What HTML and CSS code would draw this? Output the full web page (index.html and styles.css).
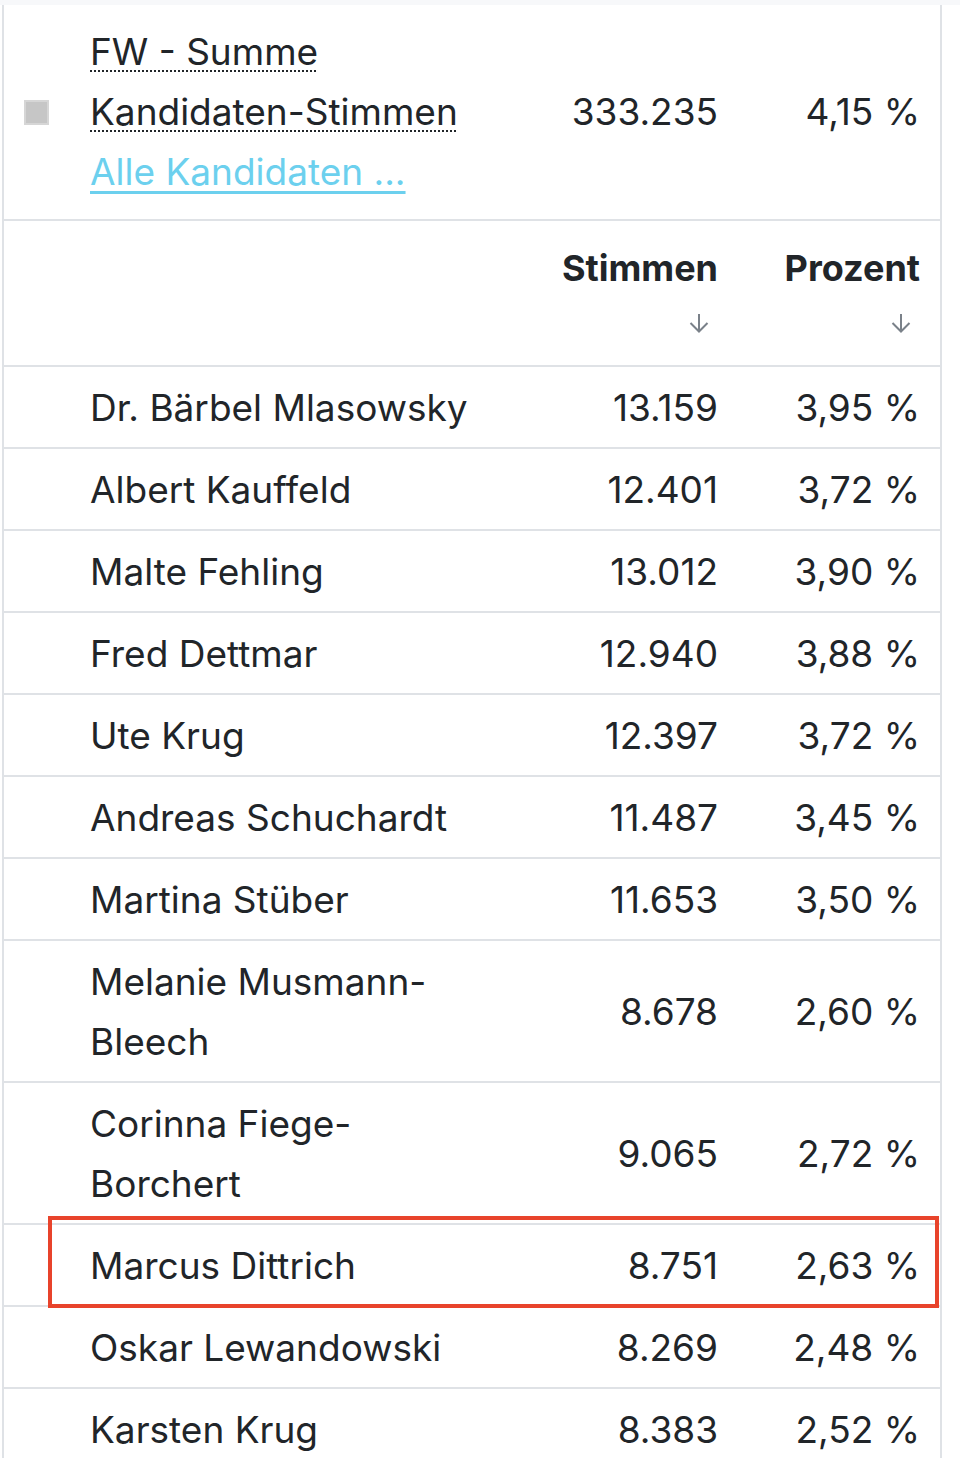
FILE: index.html
```html
<!DOCTYPE html>
<html lang="de">
<head>
<meta charset="utf-8">
<title>Kandidaten</title>
<link rel="stylesheet" href="styles.css">
</head>
<body>
<div class="topband"></div>
<div class="table">
  <div class="row row-party">
    <div class="cell cell-icon"><span class="swatch"></span></div>
    <div class="cell cell-name">
      <abbr title="Freie Wähler - Summe Kandidaten-Stimmen">FW - Summe Kandidaten-Stimmen</abbr><br>
      <a href="#" class="link">Alle Kandidaten ...</a>
    </div>
    <div class="cell cell-num">333.235</div>
    <div class="cell cell-num">4,15 %</div>
  </div>
  <div class="row row-head">
    <div class="cell cell-icon"></div>
    <div class="cell cell-name"></div>
    <div class="cell cell-head">
      <span class="head-label">Stimmen</span>
      <span class="sort"><svg width="20" height="20" viewBox="0 0 20 20"><path d="M10 1V18.5M1.5 10L10 18.5L18.5 10" fill="none" stroke="#7a8189" stroke-width="2"/></svg></span>
    </div>
    <div class="cell cell-head">
      <span class="head-label">Prozent</span>
      <span class="sort"><svg width="20" height="20" viewBox="0 0 20 20"><path d="M10 1V18.5M1.5 10L10 18.5L18.5 10" fill="none" stroke="#7a8189" stroke-width="2"/></svg></span>
    </div>
  </div>
  <div class="row"><div class="cell cell-icon"></div><div class="cell cell-name">Dr. Bärbel Mlasowsky</div><div class="cell cell-num">13.159</div><div class="cell cell-num">3,95 %</div></div>
  <div class="row"><div class="cell cell-icon"></div><div class="cell cell-name">Albert Kauffeld</div><div class="cell cell-num">12.401</div><div class="cell cell-num">3,72 %</div></div>
  <div class="row"><div class="cell cell-icon"></div><div class="cell cell-name">Malte Fehling</div><div class="cell cell-num">13.012</div><div class="cell cell-num">3,90 %</div></div>
  <div class="row"><div class="cell cell-icon"></div><div class="cell cell-name">Fred Dettmar</div><div class="cell cell-num">12.940</div><div class="cell cell-num">3,88 %</div></div>
  <div class="row"><div class="cell cell-icon"></div><div class="cell cell-name">Ute Krug</div><div class="cell cell-num">12.397</div><div class="cell cell-num">3,72 %</div></div>
  <div class="row"><div class="cell cell-icon"></div><div class="cell cell-name">Andreas Schuchardt</div><div class="cell cell-num">11.487</div><div class="cell cell-num">3,45 %</div></div>
  <div class="row"><div class="cell cell-icon"></div><div class="cell cell-name">Martina Stüber</div><div class="cell cell-num">11.653</div><div class="cell cell-num">3,50 %</div></div>
  <div class="row"><div class="cell cell-icon"></div><div class="cell cell-name">Melanie Musmann-Bleech</div><div class="cell cell-num">8.678</div><div class="cell cell-num">2,60 %</div></div>
  <div class="row"><div class="cell cell-icon"></div><div class="cell cell-name">Corinna Fiege-Borchert</div><div class="cell cell-num">9.065</div><div class="cell cell-num">2,72 %</div></div>
  <div class="row"><div class="cell cell-icon"></div><div class="cell cell-name">Marcus Dittrich</div><div class="cell cell-num">8.751</div><div class="cell cell-num">2,63 %</div></div>
  <div class="row"><div class="cell cell-icon"></div><div class="cell cell-name">Oskar Lewandowski</div><div class="cell cell-num">8.269</div><div class="cell cell-num">2,48 %</div></div>
  <div class="row"><div class="cell cell-icon"></div><div class="cell cell-name">Karsten Krug</div><div class="cell cell-num">8.383</div><div class="cell cell-num">2,52 %</div></div>
</div>
<div class="highlight"></div>
</body>
</html>
```

FILE: styles.css
```css
html, body {
  margin: 0;
  padding: 0;
  background: #ffffff;
}

body {
  font-family: Inter, "Noto Sans", "Liberation Sans", sans-serif;
  font-size: 37px;
  line-height: 60px;
  color: #212529;
  position: relative;
  overflow: hidden;
  height: 1458px;
}

.topband {
  height: 5px;
  background: #f7f8fa;
}

.table {
  margin-left: 2px;
  width: 936px;
  border-left: 2px solid #dfe2e6;
  border-right: 2px solid #dfe2e6;
}

.row {
  display: grid;
  grid-template-columns: 86px 450px 198px 202px;
  align-items: center;
  border-bottom: 2px solid #dfe2e6;
}

.cell {
  padding: 11px 0 9px;
}

.row-party .cell,
.row-head .cell {
  padding-top: 17px;
  padding-bottom: 17px;
}

.row-head {
  align-items: start;
}

.cell-icon {
  padding-left: 20px;
  display: flex;
  align-items: center;
}

.swatch {
  display: block;
  width: 25px;
  height: 25px;
  box-sizing: border-box;
  background: #c6c6c6;
  border: 2px solid #d6d6d6;
}

.cell-name {
  padding-right: 55px;
}

.cell-num,
.cell-head {
  text-align: right;
  padding-right: 20px;
}

abbr {
  text-decoration: underline dotted;
  text-decoration-thickness: 2px;
  text-underline-offset: 5px;
}

.link {
  color: #6cd0ee;
  text-decoration: underline;
  text-decoration-thickness: 3px;
  text-underline-offset: 6px;
}

.head-label {
  display: block;
  font-weight: 700;
  font-size: 36px;
}

.sort {
  display: flex;
  justify-content: flex-end;
  align-items: center;
  height: 50px;
  padding-right: 9px;
}

.sort svg {
  display: block;
}

.highlight {
  position: absolute;
  left: 48px;
  top: 1216px;
  width: 891px;
  height: 92px;
  box-sizing: border-box;
  border: 4px solid #e8432b;
}
```
